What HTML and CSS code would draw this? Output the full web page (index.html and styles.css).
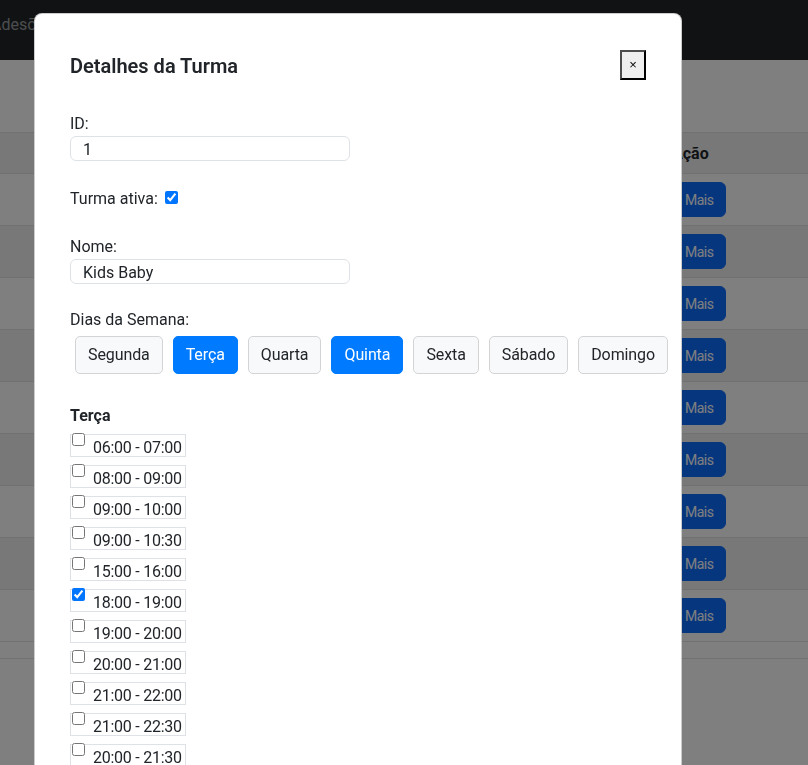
FILE: index.html
```html
<!DOCTYPE html>
<html lang="pt-BR">
<head>
<meta charset="utf-8">
<title>Turmas</title>
<link rel="stylesheet" href="styles.css">
</head>
<body>
<nav class="navbar">
  <a class="nav-link nav-link-first" href="#">Adesões</a>
</nav>

<main class="page">
  <div class="page-header"></div>
  <table class="table">
    <colgroup><col class="col-main"><col></colgroup>
    <thead>
      <tr><th></th><th>Ação</th></tr>
    </thead>
    <tbody>
      <tr><td></td><td><button class="btn-more">Mais</button></td></tr>
      <tr><td></td><td><button class="btn-more">Mais</button></td></tr>
      <tr><td></td><td><button class="btn-more">Mais</button></td></tr>
      <tr><td></td><td><button class="btn-more">Mais</button></td></tr>
      <tr><td></td><td><button class="btn-more">Mais</button></td></tr>
      <tr><td></td><td><button class="btn-more">Mais</button></td></tr>
      <tr><td></td><td><button class="btn-more">Mais</button></td></tr>
      <tr><td></td><td><button class="btn-more">Mais</button></td></tr>
      <tr><td></td><td><button class="btn-more">Mais</button></td></tr>
    </tbody>
    <tfoot>
      <tr><td></td><td></td></tr>
    </tfoot>
  </table>
</main>

<div class="modal-backdrop">
  <div class="modal">
    <div class="modal-header">
      <h5 class="modal-title">Detalhes da Turma</h5>
      <button class="btn-close" type="button">×</button>
    </div>

    <div class="field field-id">
      <label class="field-label">ID:</label>
      <input class="field-input" type="text" value="1" readonly>
    </div>

    <div class="field field-inline">
      <label class="inline-label">Turma ativa: <input class="check" type="checkbox" checked></label>
    </div>

    <div class="field">
      <label class="field-label">Nome:</label>
      <input class="field-input" type="text" value="Kids Baby">
    </div>

    <div class="field-days">
      <label class="field-label">Dias da Semana:</label>
      <div class="days">
        <button class="day" type="button">Segunda</button>
        <button class="day day-active" type="button">Terça</button>
        <button class="day" type="button">Quarta</button>
        <button class="day day-active" type="button">Quinta</button>
        <button class="day" type="button">Sexta</button>
        <button class="day" type="button">Sábado</button>
        <button class="day" type="button">Domingo</button>
      </div>
    </div>

    <h6 class="slots-title">Terça</h6>
    <div class="slots">
      <label class="slot"><input class="slot-check" type="checkbox"><span class="slot-text">06:00 - 07:00</span></label>
      <label class="slot"><input class="slot-check" type="checkbox"><span class="slot-text">08:00 - 09:00</span></label>
      <label class="slot"><input class="slot-check" type="checkbox"><span class="slot-text">09:00 - 10:00</span></label>
      <label class="slot"><input class="slot-check" type="checkbox"><span class="slot-text">09:00 - 10:30</span></label>
      <label class="slot"><input class="slot-check" type="checkbox"><span class="slot-text">15:00 - 16:00</span></label>
      <label class="slot"><input class="slot-check" type="checkbox" checked><span class="slot-text">18:00 - 19:00</span></label>
      <label class="slot"><input class="slot-check" type="checkbox"><span class="slot-text">19:00 - 20:00</span></label>
      <label class="slot"><input class="slot-check" type="checkbox"><span class="slot-text">20:00 - 21:00</span></label>
      <label class="slot"><input class="slot-check" type="checkbox"><span class="slot-text">21:00 - 22:00</span></label>
      <label class="slot"><input class="slot-check" type="checkbox"><span class="slot-text">21:00 - 22:30</span></label>
      <label class="slot"><input class="slot-check" type="checkbox"><span class="slot-text">20:00 - 21:30</span></label>
    </div>
  </div>
</div>
</body>
</html>
```

FILE: styles.css
```css
html, body {
  margin: 0;
  height: 100%;
  overflow: hidden;
}

body {
  font-family: Roboto, "Liberation Sans", sans-serif;
  font-size: 16px;
  line-height: 24px;
  color: #212529;
  background: #fff;
}

/* ---------- background page ---------- */
.navbar {
  height: 60px;
  box-sizing: border-box;
  padding-top: 13px;
  background: #212529;
  display: flex;
  align-items: flex-start;
}

.nav-link {
  color: rgba(255, 255, 255, .55);
  text-decoration: none;
  line-height: 24px;
}

.nav-link-first {
  margin-left: -9px;
}

.page-header {
  height: 72px;
}

.table {
  width: 100%;
  border-collapse: collapse;
  table-layout: fixed;
}

.col-main { width: 664px; }

.table th,
.table td {
  padding: 8px;
  text-align: left;
  vertical-align: middle;
  border-bottom: 1px solid #dee2e6;
}

.table thead th {
  border-top: 1px solid #dee2e6;
  background: #f1f1f1;
  font-weight: 700;
  line-height: 24px;
  padding: 9px 8px 7px;
}

.table tbody tr:nth-child(even) td {
  background: #f1f1f1;
}

.btn-more {
  display: block;
  height: 35px;
  box-sizing: border-box;
  padding: 8px 12px 6px;
  border: 1px solid #0d6efd;
  border-radius: 6px;
  background: #0d6efd;
  color: #fff;
  font-family: Roboto, "Liberation Sans", sans-serif;
  font-size: 14px;
  line-height: 19px;
  letter-spacing: -0.5px;
}

/* ---------- modal ---------- */
.modal-backdrop {
  position: fixed;
  inset: 0;
  background: rgba(0, 0, 0, .5);
  overflow: hidden;
}

.modal {
  width: 648px;
  box-sizing: border-box;
  margin: 13px 0 0 34px;
  padding: 36px 35px 40px;
  background: #fff;
  border: 1px solid rgba(0, 0, 0, .2);
  border-radius: 8px;
}

.modal-header {
  display: flex;
  justify-content: space-between;
  align-items: flex-start;
  height: 30px;
  margin-bottom: 32px;
}

.modal-title {
  margin: 1px 0 0;
  font-size: 20px;
  line-height: 30px;
  font-weight: 600;
}

.btn-close {
  width: 26px;
  height: 30px;
  padding: 0;
  border: 2px solid;
  border-color: #4d4d4d #000 #000 #4d4d4d;
  background: #efefef;
  color: #000;
  font-family: "Liberation Sans", sans-serif;
  font-size: 13px;
  line-height: 26px;
}

.field {
  margin-bottom: 24px;
}

.field-id {
  margin-bottom: 26px;
}

.field-label {
  display: block;
  line-height: 24px;
}

.field-input {
  display: block;
  width: 280px;
  height: 25px;
  box-sizing: border-box;
  margin: 0;
  padding: 1px 12px 0;
  border: 1px solid #dee2e6;
  border-radius: 6px;
  font-family: Roboto, "Liberation Sans", sans-serif;
  font-size: 16px;
  color: #212529;
  outline: none;
}

.inline-label {
  line-height: 24px;
}

.check {
  width: 13px;
  height: 13px;
  margin: 0 0 0 3px;
  accent-color: #0075ff;
}

.days {
  display: flex;
  flex-wrap: nowrap;
  margin: 4px 0;
}

.day {
  flex: none;
  margin: 0 5px;
  padding: 6px 12px;
  border: 1px solid #d3d4d5;
  border-radius: 5px;
  background: #f8f9fa;
  color: #212529;
  font-family: Roboto, "Liberation Sans", sans-serif;
  font-size: 16px;
  line-height: 24px;
  letter-spacing: -0.1px;
}

.day-active {
  background: #007bff;
  border-color: #007bff;
  color: #fff;
}

.slots-title {
  margin: 30px 0 6px;
  font-size: 16px;
  line-height: 24px;
  font-weight: 700;
}

.slots {
  display: flex;
  flex-direction: column;
  align-items: flex-start;
}

.slot {
  display: flex;
  align-items: flex-start;
  height: 23px;
  box-sizing: border-box;
  margin-bottom: 8px;
  padding-right: 3px;
  border: 1px solid #dee2e6;
}

.slot-check {
  flex: none;
  width: 13px;
  height: 13px;
  margin: -2px 0 0 1px;
  accent-color: #0075ff;
}

.slot-text {
  margin-left: 8px;
  padding-top: 2px;
  line-height: 21px;
  white-space: nowrap;
  letter-spacing: -0.25px;
}
```
